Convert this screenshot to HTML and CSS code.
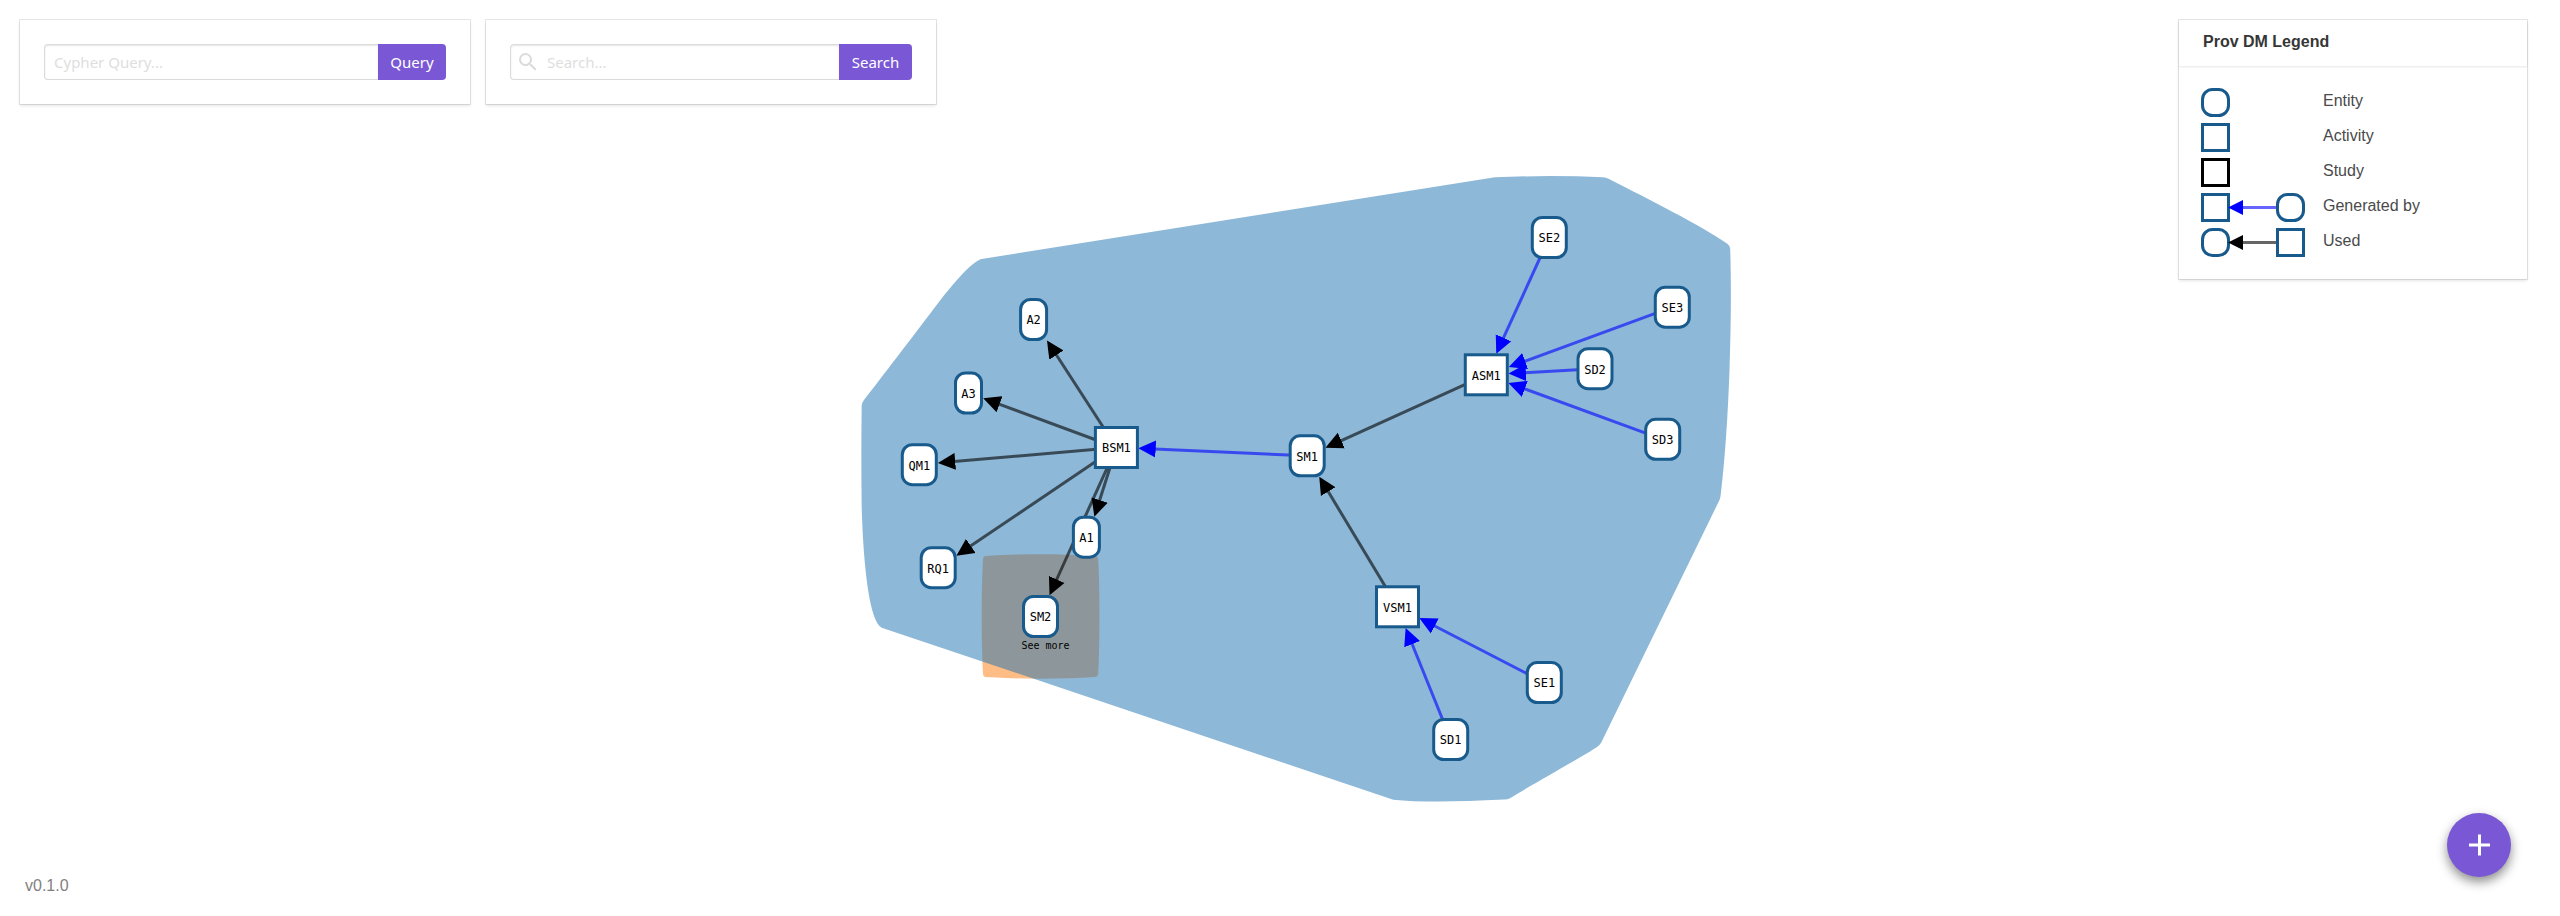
FILE: index.html
```html
<!DOCTYPE html>
<html lang="en">
<head>
<meta charset="utf-8">
<title>Provenance Graph</title>
<link rel="stylesheet" href="styles.css">
</head>
<body>
<svg class="graph" viewBox="0 0 2560 916" width="2560" height="916">
  <defs>
    <marker id="tip-used" markerUnits="userSpaceOnUse" markerWidth="18" markerHeight="18" viewBox="0 -9 18 18" refX="-0.4" refY="0" orient="auto"><path d="M-0.400,-8.500L17,0L-0.400,8.500Z" fill="#000"/></marker>
    <marker id="tip-gen" markerUnits="userSpaceOnUse" markerWidth="18" markerHeight="18" viewBox="0 -9 18 18" refX="1.2" refY="0" orient="auto"><path d="M0,-8.500L17.400,0L0,8.500Z" fill="#00f"/></marker>
    <marker id="tip-used-2" markerUnits="userSpaceOnUse" markerWidth="18" markerHeight="18" viewBox="0 -9 18 18" refX="1.2" refY="0" orient="auto"><path d="M0,-8.500L17.400,0L0,8.500Z" fill="#000"/></marker>
  </defs>
  <path class="hull hull-orange" d="M985,556C1020,553.700 1060,553.700 1095.500,556Q1098,556.500 1098.200,559C1099.900,590 1099.900,640 1098.200,674Q1098,676.800 1095.500,677C1060,679.200 1020,679.200 985,677Q983.300,676.500 983,674C981.200,640 981.200,590 983,559Q983.200,556.200 985,556Z"/>
  <path class="hull hull-blue" d="M981.700,259L1495,177.300Q1550,175 1603,177.200Q1606,177.300 1609,179C1650,200 1700,225 1727,243.500Q1730,245.500 1730.200,249C1731.200,280 1731.200,320 1729.500,370Q1727,440 1721,492Q1720.500,499 1718.500,502L1601.500,742Q1600,745 1597,747C1587,754 1545,777 1510,798.200Q1508,799.400 1504,799.600Q1430,803.500 1393.300,799.700L881.700,627.700C870,622 863.500,570 861.700,508Q861,456 861.700,405Q862,403 864,400C882,377 910,340 942,298C958,278 973,261 981.700,259Z"/>
  <g class="used">
    <path d="M1116.400,447.500L1055.800,354"/>
    <path d="M1116.400,447.500L998.400,403.800"/>
    <path d="M1116.400,447.500L954,461.500"/>
    <path d="M1116.400,447.500L969.800,546.600"/>
    <path d="M1116.400,447.500L1099.300,501.200"/>
    <path d="M1116.400,447.500L1056.200,580.500"/>
    <path d="M1486.300,374.800L1340.200,441.100"/>
    <path d="M1397.500,606.800L1327.600,490.600"/>
  </g>
  <g class="generated">
    <path d="M1307.200,455.800L1154.500,449"/>
    <path d="M1544.300,682.500L1433.700,625.500"/>
    <path d="M1450.700,739.500L1411.700,643"/>
    <path d="M1549.300,237.500L1503,338.900"/>
    <path d="M1672.300,307.200L1524,361.500"/>
    <path d="M1595,368.700L1524.700,372.700"/>
    <path d="M1662.700,439.300L1523.700,388.500"/>
  </g>
  <g class="nodes">
    <g transform="translate(1033.6 319.5)"><rect x="-13" y="-20" width="26" height="40" rx="10"/><text y="4.800">A2</text></g>
    <g transform="translate(968.5 393)"><rect x="-13" y="-20" width="26" height="40" rx="10"/><text y="4.800">A3</text></g>
    <g transform="translate(919.3 464.7)"><rect x="-17" y="-20" width="34" height="40" rx="10"/><text y="4.800">QM1</text></g>
    <g transform="translate(938.2 567.7)"><rect x="-17" y="-20" width="34" height="40" rx="10"/><text y="4.800">RQ1</text></g>
    <g transform="translate(1086.4 537.2)"><rect x="-13" y="-20" width="26" height="40" rx="10"/><text y="4.800">A1</text></g>
    <g transform="translate(1040.5 616.5)"><rect x="-17" y="-20" width="34" height="40" rx="10"/><text y="4.800">SM2</text></g>
    <g transform="translate(1116.4 447.5)"><rect x="-21" y="-20" width="42" height="40"/><text y="4.800">BSM1</text></g>
    <g transform="translate(1307.2 455.8)"><rect x="-17" y="-20" width="34" height="40" rx="10"/><text y="4.800">SM1</text></g>
    <g transform="translate(1397.5 606.8)"><rect x="-21" y="-20" width="42" height="40"/><text y="4.800">VSM1</text></g>
    <g transform="translate(1544.3 682.5)"><rect x="-17" y="-20" width="34" height="40" rx="10"/><text y="4.800">SE1</text></g>
    <g transform="translate(1450.7 739.5)"><rect x="-17" y="-20" width="34" height="40" rx="10"/><text y="4.800">SD1</text></g>
    <g transform="translate(1549.3 237.5)"><rect x="-17" y="-20" width="34" height="40" rx="10"/><text y="4.800">SE2</text></g>
    <g transform="translate(1672.3 307.2)"><rect x="-17" y="-20" width="34" height="40" rx="10"/><text y="4.800">SE3</text></g>
    <g transform="translate(1595 368.7)"><rect x="-17" y="-20" width="34" height="40" rx="10"/><text y="4.800">SD2</text></g>
    <g transform="translate(1662.7 439.3)"><rect x="-17" y="-20" width="34" height="40" rx="10"/><text y="4.800">SD3</text></g>
    <g transform="translate(1486.3 374.8)"><rect x="-21" y="-20" width="42" height="40"/><text y="4.800">ASM1</text></g>
    <text class="more" x="1045.500" y="649">See more</text>
  </g>
</svg>

<div class="page">
  <header class="top">
    <form class="card search-card">
      <div class="field">
        <input class="input" type="text" placeholder="Cypher Query...">
        <button class="button query" type="button">Query</button>
      </div>
    </form>
    <form class="card search-card">
      <div class="field">
        <label class="input with-icon">
          <svg class="icon" viewBox="0 0 24 24" width="24" height="24"><path d="M9.500,3A6.500,6.500 0 0,1 16,9.500C16,11.110 15.410,12.590 14.440,13.730L14.710,14H15.500L20.500,19L19,20.500L14,15.500V14.710L13.730,14.440C12.590,15.410 11.110,16 9.500,16A6.500,6.500 0 0,1 3,9.500A6.500,6.500 0 0,1 9.500,3M9.500,5C7,5 5,7 5,9.500C5,12 7,14 9.500,14C12,14 14,12 14,9.500C14,7 12,5 9.500,5Z"/></svg>
          <input class="bare" type="text" placeholder="Search...">
        </label>
        <button class="button search" type="button">Search</button>
      </div>
    </form>
    <aside class="card legend">
      <h1 class="legend-title">Prov DM Legend</h1>
      <ul class="legend-list">
        <li><svg width="110" height="35"><rect class="shape" x="3.500" y="4.500" width="26" height="26" rx="10"/></svg><span>Entity</span></li>
        <li><svg width="110" height="35"><rect class="shape" x="3.500" y="4.500" width="26" height="26"/></svg><span>Activity</span></li>
        <li><svg width="110" height="35"><rect class="shape study" x="3.500" y="4.500" width="26" height="26"/></svg><span>Study</span></li>
        <li><svg width="110" height="35"><path class="link-gen" d="M79,17.500H44"/><rect class="shape" x="3.500" y="4.500" width="26" height="26"/><rect class="shape" x="78.500" y="4.500" width="26" height="26" rx="10"/><path d="M29,17.500L44,10V25Z" fill="#00f"/></svg><span>Generated by</span></li>
        <li><svg width="110" height="35"><path class="link-used" d="M79,17.500H44"/><rect class="shape" x="3.500" y="4.500" width="26" height="26" rx="10"/><rect class="shape" x="78.500" y="4.500" width="26" height="26"/><path d="M29,17.500L44,10V25Z"/></svg><span>Used</span></li>
      </ul>
    </aside>
  </header>
  <footer class="bottom">
    <span class="version">v0.1.0</span>
    <button class="fab" type="button" aria-label="Add"><svg viewBox="0 0 22 22" width="22" height="22"><path d="M11.500,0.500V21.500M1,11H22"/></svg></button>
  </footer>
</div>
</body>
</html>
```
FILE: styles.css
```css
* { box-sizing: border-box; }
body {
  margin: 0;
  background: #fff;
  color: #4a4a4a;
  font: 16px/24px "Liberation Sans", Arial, sans-serif;
  overflow: hidden;
}
.graph { position: absolute; left: 0; top: 0; }
.hull { opacity: .5; }
.hull-orange { fill: #ff7b0b; }
.hull-blue { fill: #1b71b2; }
.used path, .generated path { stroke-width: 3; stroke-opacity: .6; fill: none; }
.used path { stroke: #000; marker-end: url(#tip-used-2); }
.generated path { stroke: #00f; marker-end: url(#tip-gen); }
.nodes rect { fill: #fff; stroke: #185a8b; stroke-width: 3; }
.nodes text {
  font: 12px "DejaVu Sans Mono", monospace;
  fill: #000;
  text-anchor: middle;
}
.nodes .more { font-size: 10px; }

.page {
  position: relative;
  display: flex;
  flex-direction: column;
  justify-content: space-between;
  height: 916px;
  padding: 20px 33px 39px 20px;
}
.top { display: flex; align-items: flex-start; gap: 16px; }
.card {
  background: #fff;
  box-shadow: 0 2px 3px rgba(10,10,10,.1), 0 0 0 1px rgba(10,10,10,.1);
}
.search-card { width: 450px; padding: 24px; }
.field { display: flex; height: 36px; }
.input {
  flex: 1;
  min-width: 0;
  display: flex;
  align-items: center;
  padding: 0 9px;
  border: 1px solid #dbdbdb;
  border-right: 0;
  border-radius: 4px 0 0 4px;
  background: #fff;
  box-shadow: inset 0 1px 2px rgba(10,10,10,.1);
  font: 15px "Noto Sans", sans-serif;
}
.with-icon { padding: 0 0 0 5px; }
.icon { fill: #dbdbdb; flex: none; }
.bare {
  flex: 1;
  min-width: 0;
  border: 0;
  padding: 0 0 0 7px;
  background: none;
  font: inherit;
}
::placeholder { color: #dedede; opacity: 1; }
.button {
  border: 0;
  padding: 0;
  border-radius: 0 4px 4px 0;
  background: #7957d5;
  color: #fff;
  font: 15px "Noto Sans", sans-serif;
}
.query { width: 68px; }
.search { width: 73px; }

.legend { width: 348px; height: 259px; margin-left: auto; }
.legend-title {
  margin: 0;
  height: 46px;
  padding: 10px 24px;
  color: #363636;
  font-size: 16px;
  line-height: 24px;
  box-shadow: 0 1px 2px rgba(10,10,10,.1);
}
.legend-list { list-style: none; margin: 0; padding: 19px 20px; }
.legend-list li { display: flex; height: 35px; gap: 14px; }
.legend-list span { padding-top: 4px; }
.shape { fill: #fff; stroke: #185a8b; stroke-width: 3; }
.study { stroke: #000; }
.link-gen, .link-used { stroke: #00f; stroke-width: 3; stroke-opacity: .6; }
.link-used { stroke: #000; }

.bottom { display: flex; justify-content: space-between; align-items: flex-end; padding: 0 16px 0 5px; }
.version { color: #7f7f7f; margin-bottom: -21px; }
.fab {
  display: flex;
  align-items: center;
  justify-content: center;
  width: 64px;
  height: 64px;
  padding: 0;
  border: 0;
  border-radius: 50%;
  background: #7957d5;
  box-shadow: 0 5px 11px rgba(0,0,0,.45);
}
.fab path { stroke: #fff; stroke-width: 3; }
```
